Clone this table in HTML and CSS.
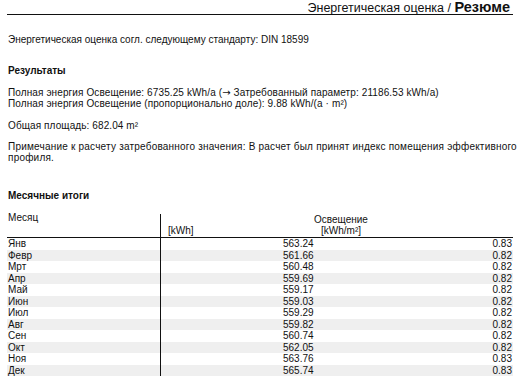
FILE: index.html
```html
<!DOCTYPE html>
<html lang="ru">
<head>
<meta charset="utf-8">
<link rel="stylesheet" href="styles.css">
</head>
<body>
<div class="page">
  <header class="title-bar">
    <span class="title">Энергетическая оценка / <b>Резюме</b></span>
  </header>

  <p class="std">Энергетическая оценка согл. следующему стандарту: DIN 18599</p>

  <h2 class="sec">Результаты</h2>
  <p class="lines">Полная энергия Освещение: 6735.25 kWh/a (<span class="arr">→</span> Затребованный параметр: 21186.53 kWh/a)<br>Полная энергия Освещение (пропорционально доле): 9.88 kWh/(a · m²)</p>
  <p class="area">Общая площадь: 682.04 m²</p>
  <p class="note">Примечание к расчету затребованного значения: В расчет был принят индекс помещения эффективного профиля.</p>

  <h2 class="sec sec-month">Месячные итоги</h2>
  <div class="tbl">
    <div class="thead">
      <div class="c1 h-month">Месяц</div>
      <div class="c23">
        <div class="h-group">Освещение</div>
        <div class="h-units"><span class="u1">[kWh]</span><span class="u2">[kWh/m²]</span></div>
      </div>
    </div>
    <div class="row"><div class="c1">Янв</div><div class="c2">563.24</div><div class="c3">0.83</div></div>
    <div class="row alt"><div class="c1">Февр</div><div class="c2">561.66</div><div class="c3">0.82</div></div>
    <div class="row"><div class="c1">Мрт</div><div class="c2">560.48</div><div class="c3">0.82</div></div>
    <div class="row alt"><div class="c1">Апр</div><div class="c2">559.69</div><div class="c3">0.82</div></div>
    <div class="row"><div class="c1">Май</div><div class="c2">559.17</div><div class="c3">0.82</div></div>
    <div class="row alt"><div class="c1">Июн</div><div class="c2">559.03</div><div class="c3">0.82</div></div>
    <div class="row"><div class="c1">Июл</div><div class="c2">559.29</div><div class="c3">0.82</div></div>
    <div class="row alt"><div class="c1">Авг</div><div class="c2">559.82</div><div class="c3">0.82</div></div>
    <div class="row"><div class="c1">Сен</div><div class="c2">560.74</div><div class="c3">0.82</div></div>
    <div class="row alt"><div class="c1">Окт</div><div class="c2">562.05</div><div class="c3">0.82</div></div>
    <div class="row"><div class="c1">Ноя</div><div class="c2">563.76</div><div class="c3">0.83</div></div>
    <div class="row alt"><div class="c1">Дек</div><div class="c2">565.74</div><div class="c3">0.83</div></div>
  </div>
</div>
</body>
</html>
```

FILE: styles.css
```css
html, body {
  margin: 0;
  padding: 0;
  background: #fff;
}
body {
  font-family: "Liberation Sans", Arial, sans-serif;
  font-size: 10px;
  color: #111;
}
.page {
  width: 506px;
  padding: 0 14px 0 7px;
}
.title-bar {
  display: flex;
  justify-content: flex-end;
  align-items: flex-start;
  height: 14px;
  border-bottom: 1px solid #111;
  padding-right: 3px;
}
.title {
  font-size: 12.5px;
  line-height: 14px;
  white-space: nowrap;
}
.title b {
  font-size: 14.5px;
}
p, h2 {
  margin: 0;
  padding-left: 1px;
  line-height: 11px;
}
.std {
  margin-top: 19px;
}
.sec {
  font-size: 10px;
  font-weight: bold;
  margin-top: 20px;
}
.lines {
  margin-top: 11px;
  letter-spacing: 0.11px;
}
.arr {
  font-family: "DejaVu Sans", sans-serif;
  font-size: 10px;
  line-height: 10px;
}
.area {
  margin-top: 11px;
  letter-spacing: 0.1px;
}
.note {
  margin-top: 10px;
  margin-right: -10px;
  letter-spacing: 0.21px;
}
.sec-month {
  margin-top: 27px;
}
.tbl {
  margin-top: 10px;
  width: 506px;
}
.thead {
  display: grid;
  grid-template-columns: 153px 353px;
  height: 26px;
  border-bottom: 1px solid #111;
}
.thead .c1 {
  line-height: 11px;
  padding-top: 1px;
  padding-left: 1px;
}
.c23 {
  margin-top: 3px;
  border-left: 1px solid #111;
  display: flex;
  flex-direction: column;
}
.h-group {
  text-align: center;
  padding-left: 8px;
  line-height: 11px;
}
.h-units {
  display: flex;
  line-height: 11px;
}
.u1 {
  width: 149px;
  padding-left: 7px;
}
.u2 {
  padding-left: 4px;
}
.row {
  display: grid;
  grid-template-columns: 153px 153px 200px;
  height: 11.5px;
  line-height: 11.5px;
}
.row.alt {
  background: #efefef;
}
.row .c1 {
  padding-left: 1px;
}
.row .c2 {
  border-left: 1px solid #111;
  padding-left: 122px;
}
.row .c3 {
  text-align: right;
  padding-right: 1px;
}
```
